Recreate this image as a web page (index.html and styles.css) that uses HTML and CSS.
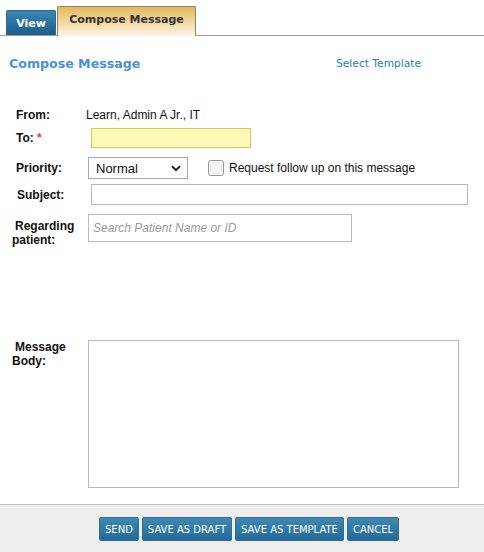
FILE: index.html
```html
<!DOCTYPE html>
<html>
<head>
<meta charset="utf-8">
<link rel="stylesheet" href="styles.css">
</head>
<body>
<div class="page">
  <div class="tabs">
    <div class="tab tab-view">View</div>
    <div class="tab tab-compose">Compose Message</div>
  </div>
  <div class="main">
    <div class="head-row">
      <h1 class="title">Compose Message</h1>
      <a class="template-link">Select Template</a>
    </div>
    <div class="form">
      <div class="row row-from">
        <div class="label">From:</div>
        <div class="value">Learn, Admin A Jr., IT</div>
      </div>
      <div class="row row-to">
        <div class="label">To: <span class="req">*</span></div>
        <input class="field field-to" type="text">
      </div>
      <div class="row row-priority">
        <div class="label">Priority:</div>
        <div class="select-wrap">
          <select class="select"><option>Normal</option></select>
          <svg class="chev" width="10" height="7" viewBox="0 0 10 7"><path d="M1 1.2 L5 5.2 L9 1.2" fill="none" stroke="#222" stroke-width="2"/></svg>
        </div>
        <span class="check"></span>
        <span class="check-label">Request follow up on this message</span>
      </div>
      <div class="row row-subject">
        <div class="label label-subject">Subject:</div>
        <input class="field field-subject" type="text">
      </div>
      <div class="row row-regarding">
        <div class="label label-two"><span class="l1">Regarding</span><br>patient:</div>
        <input class="field field-patient" type="text" placeholder="Search Patient Name or ID">
      </div>
      <div class="row row-body">
        <div class="label label-two label-body"><span class="l1">Message</span><br>Body:</div>
        <textarea class="field field-body"></textarea>
      </div>
    </div>
  </div>
  <div class="footer">
    <button class="btn">SEND</button>
    <button class="btn">SAVE AS DRAFT</button>
    <button class="btn">SAVE AS TEMPLATE</button>
    <button class="btn">CANCEL</button>
  </div>
</div>
</body>
</html>
```
FILE: styles.css
```css
html, body {
  margin: 0;
  padding: 0;
  background: #fff;
}
.page {
  width: 484px;
  height: 552px;
  display: flex;
  flex-direction: column;
  font-family: "Liberation Sans", Arial, sans-serif;
  color: #111;
}
.tabs {
  height: 35px;
  flex: none;
  display: flex;
  align-items: flex-end;
  padding-left: 6px;
  gap: 1px;
  border-bottom: 1px solid #a89f8f;
}
.tab {
  font-family: "DejaVu Sans", Verdana, sans-serif;
  font-weight: bold;
  font-size: 11px;
  box-sizing: border-box;
  display: flex;
  justify-content: center;
  border-radius: 2px 2px 0 0;
}
.tab-view {
  width: 50px;
  height: 25px;
  padding-top: 6px;
  color: #fff;
  background: linear-gradient(#3a86b5, #1c5e8b);
  border: 1px solid #2a6a95;
  border-bottom: none;
}
.tab-compose {
  width: 139px;
  height: 30px;
  padding-top: 6px;
  margin-bottom: -1px;
  color: #333;
  background: linear-gradient(#e4b85c, #f3dca9 60%, #fdf6ea);
  border: 1px solid #8c8170;
  border-bottom: none;
}
.main {
  flex: 1;
}
.head-row {
  display: flex;
  align-items: center;
  height: 18px;
  margin-top: 18px;
  padding-left: 9px;
}
.title {
  margin: 0;
  font-family: "DejaVu Sans", Verdana, sans-serif;
  font-size: 12.6px;
  font-weight: bold;
  color: #4a8fdc;
  width: 327px;
}
.template-link {
  font-family: "DejaVu Sans", Verdana, sans-serif;
  font-size: 10.7px;
  color: #1b80c4;
}
.form {
  margin-top: 35px;
  padding-left: 16px;
  font-size: 12px;
}
.row {
  display: flex;
  align-items: center;
}
.label {
  width: 72px;
  flex: none;
  font-weight: bold;
  font-size: 12px;
  line-height: 14px;
  color: #111;
}
.req {
  color: #e0403a;
  font-weight: bold;
}
.row-from {
  height: 16px;
}
.value {
  margin-left: -2px;
  font-size: 12px;
}
.field {
  box-sizing: border-box;
  border: 1px solid #b8b8b8;
  background: #fff;
  font-family: "Liberation Sans", Arial, sans-serif;
  font-size: 12px;
  margin: 0;
  padding: 0 4px;
  outline: none;
}
.row-to {
  margin-top: 5px;
  height: 20px;
}
.field-to {
  margin-left: 3px;
  width: 160px;
  height: 20px;
  background: #fdf8b6;
  border-color: #dcc45c;
}
.row-priority {
  margin-top: 9px;
  height: 22px;
}
.select-wrap {
  position: relative;
  width: 100px;
  height: 22px;
}
.select {
  appearance: none;
  -webkit-appearance: none;
  box-sizing: border-box;
  width: 100px;
  height: 22px;
  margin: 0;
  border: 1px solid #aaa;
  border-radius: 0;
  background: #fff;
  font-family: "Liberation Sans", Arial, sans-serif;
  font-size: 13px;
  color: #111;
  padding: 0 0 0 7px;
}
.chev {
  position: absolute;
  right: 7px;
  top: 8px;
  pointer-events: none;
}
.check {
  box-sizing: border-box;
  width: 16px;
  height: 16px;
  margin-left: 20px;
  border: 1px solid #9a9a9a;
  border-radius: 3px;
  background: #f6f6f6;
}
.check-label {
  margin-left: 5px;
  font-size: 12px;
}
.row-subject {
  margin-top: 5px;
  height: 21px;
}
.label-subject {
  padding-left: 1px;
  width: 71px;
}
.field-subject {
  margin-left: 3px;
  width: 377px;
  height: 21px;
}
.row-regarding {
  margin-top: 9px;
  align-items: flex-start;
}
.label-two {
  margin-left: -4px;
  width: 76px;
  line-height: 13.5px;
}
.label-two .l1 {
  padding-left: 3px;
}
.row-regarding .label-two {
  padding-top: 6px;
}
.field-patient {
  width: 264px;
  height: 28px;
  padding-left: 4px;
}
.field-patient::placeholder {
  color: #9a9a9a;
  font-style: italic;
}
.row-body {
  margin-top: 93px;
  align-items: flex-start;
}
.label-body {
  padding-top: 1px;
}
.field-body {
  width: 371px;
  height: 148px;
  resize: none;
  display: block;
}
.footer {
  flex: none;
  height: 47px;
  background: #f0eeec;
  border-top: 1px solid #b9c5cd;
  display: flex;
  align-items: center;
  gap: 3px;
  padding-left: 99px;
}
.btn {
  height: 24px;
  margin: 0;
  margin-top: 1px;
  padding: 0 5px;
  font-family: "DejaVu Sans", Verdana, sans-serif;
  font-size: 10px;
  color: #fff;
  background: linear-gradient(#4189b4, #226a98);
  border: 1px solid #2c6f9a;
  border-radius: 2px;
}
```
